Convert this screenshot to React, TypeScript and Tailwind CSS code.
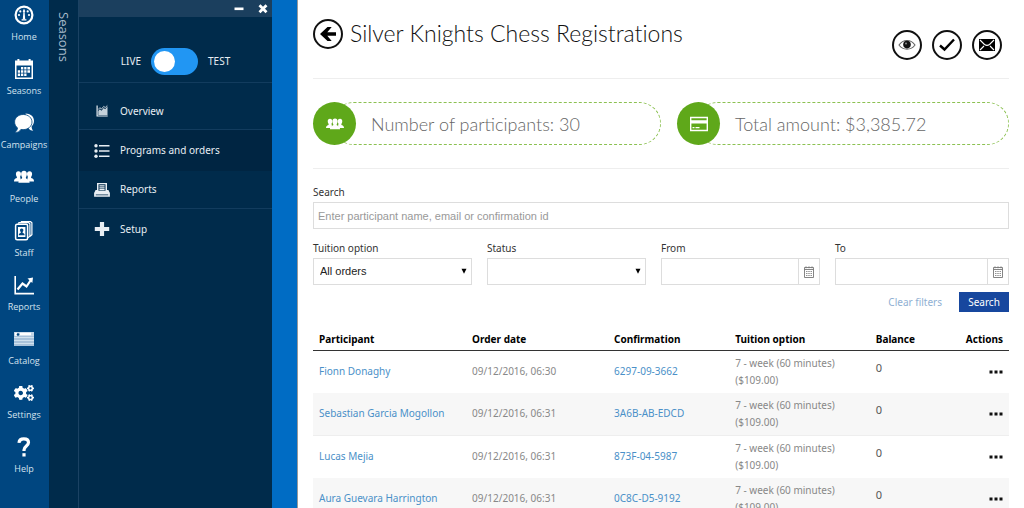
import type { ReactNode } from 'react';
import { FaCogs } from 'react-icons/fa';

function HomeIcon() {
  return (
    <svg viewBox="0 0 20 20" className="h-5 w-5" fill="currentColor">
      <circle cx="10" cy="10" r="8.4" fill="none" stroke="currentColor" strokeWidth="2.2" />
      <circle cx="5" cy="10" r="1.1" />
      <circle cx="6.3" cy="6.4" r="1.1" />
      <circle cx="13.7" cy="6.4" r="1.1" />
      <circle cx="15" cy="10" r="1.1" />
      <path d="M10 3.6l1.3 3-.7.3.6 7.4H8.8l.6-7.4-.7-.3z" />
      <path d="M7.6 14.2h4.8v1.3H7.6z" />
    </svg>
  );
}

function SeasonsIcon() {
  return (
    <svg viewBox="0 0 20 20" className="h-5 w-5" fill="currentColor">
      <path fillRule="evenodd" d="M1 1.500h18V20H1zM2.500 6.500v12h15v-12z" />
      <rect x="3.4" y="0" width="2" height="4" />
      <rect x="14.6" y="0" width="2" height="4" />
      <path d="M7 8h2.300v2.400H7zM10.200 8h2.300v2.400h-2.300zM13.400 8h2.600v2.400h-2.600zM3.800 11.300h2.300v2.400H3.800zM7 11.300h2.300v2.400H7zM10.200 11.300h2.300v2.400h-2.300zM13.400 11.300h2.600v2.400h-2.600zM3.800 14.600h2.300V17H3.800zM7 14.600h2.300V17H7zM10.200 14.600h2.300V17h-2.300z" />
    </svg>
  );
}

function CampaignsIcon() {
  return (
    <svg viewBox="0 0 20 20" className="h-5 w-5" fill="currentColor">
      <path d="M11.500.5c4.900 0 8.500 3 8.500 7.200 0 2.400-.9 4.300-2.400 5.700.1 1.900.6 3 1.700 4.400-2 0-3.500-.8-4.500-2z" />
      <path
        d="M9.300 1.500C4.400 1.500.6 4.800.6 9c0 2.400 1.100 4.400 2.900 5.800-.1 1.900-1 3.400-2.700 4.900 2.700 0 4.800-1.200 6.100-3.300.8.2 1.600.2 2.400.2 4.900 0 8.700-3.400 8.700-7.600S14.200 1.500 9.300 1.500z"
        stroke="#004680"
        strokeWidth=".8"
      />
    </svg>
  );
}

function PeopleIcon({ className = 'h-5 w-5' }: { className?: string }) {
  return (
    <svg viewBox="0 0 20 20" className={className} fill="currentColor">
      <path d="M4.400 4.200C6.200 4.200 7 5.300 7 7c0 1.200-.5 2.200-.9 2.800 0 .6.500 1.500.5 1.500l-.8 3.200H0c0-2.200.6-2.600 2.800-3.500.2-.4.2-.8 0-1.200C2.300 9.200 1.900 8.200 1.900 7c0-1.700.8-2.800 2.500-2.800zM15.600 4.200C13.800 4.200 13 5.300 13 7c0 1.200.5 2.200.9 2.800 0 .6-.5 1.500-.5 1.500l.8 3.200H20c0-2.200-.6-2.600-2.800-3.500-.2-.4-.2-.8 0-1.200.5-.6.9-1.600.9-2.800 0-1.700-.8-2.800-2.500-2.800z" />
      <path d="M10 3.800c2 0 2.900 1.300 2.900 3.200 0 1.500-.6 2.600-1 3.200-.1.600 0 1 .2 1.300 2.500 1 3.500 1.700 3.500 4.300H4.400c0-2.600 1-3.300 3.500-4.300.2-.3.300-.7.200-1.300-.4-.6-1-1.700-1-3.200 0-1.900.9-3.200 2.900-3.200z" />
    </svg>
  );
}

function StaffIcon() {
  return (
    <svg viewBox="0 0 20 20" className="h-5 w-5" fill="none" stroke="currentColor" strokeWidth="1.200">
      <path d="M4.500 2.800l.4-1.200h9.400l1.600 1.200v12.400l-1.800 1.400M7 1.500L7.400.7h9.200l1.300 1v12l-1.700 1.500" />
      <rect x="1.600" y="3.200" width="12" height="15.600" rx="1.500" strokeWidth="1.500" />
      <path fill="currentColor" stroke="none" d="M4 6h7.400v10H4z" />
      <path fill="#004680" stroke="none" d="M7.700 7.500c1.200 0 1.700.8 1.700 1.800 0 .8-.4 1.400-.8 1.800v.6c1.500.5 2 1 2 2.500H4.800c0-1.500.5-2 2-2.500v-.6c-.4-.4-.8-1-.8-1.800 0-1 .5-1.800 1.700-1.800z" />
    </svg>
  );
}

function ReportsIcon() {
  return (
    <svg viewBox="0 0 20 20" className="h-5 w-5" fill="none" stroke="currentColor">
      <path d="M1.200 1v17.600H20" strokeWidth="1.600" />
      <path d="M3.500 14.500l5-6 4 3 4.700-7" strokeWidth="2.200" />
      <path d="M13.500 3.400l5.500-.9-.7 5.500z" fill="currentColor" stroke="none" />
    </svg>
  );
}

function CatalogIcon() {
  return (
    <svg viewBox="0 0 20 20" className="h-5 w-5">
      <rect y="3" width="20" height="14" fill="#a9c2da" />
      <path d="M0 3h20v4H0z" fill="#c3d5e6" />
      <path d="M1 3.800h2v3H1zM6 3.800h11v2.400H6z" fill="#fff" />
      <circle cx="4" cy="5.500" r="1.300" fill="#004680" />
      <path d="M0 8.500h20M0 11.500h20M0 14.500h20" stroke="#dce8f2" strokeWidth=".8" />
    </svg>
  );
}

function HelpIcon() {
  return (
    <svg viewBox="0 0 20 20" className="h-5 w-5" fill="none" stroke="currentColor" strokeWidth="3.200">
      <path d="M5 5.900C5.200 2.900 7 1.900 9.800 1.900c3 0 4.700 1.300 4.700 3.700 0 3.400-4.500 3.500-4.500 7.400v1" />
      <path d="M10 16.200v3.300" />
    </svg>
  );
}

function OverviewIcon() {
  return (
    <svg viewBox="0 0 16 16" className="h-4 w-4" fill="currentColor">
      <path d="M2.500 2.500h1.200v10h10v1H2.500z" />
      <path d="M4.300 12V8l1.500-1.800 1.700 1.500L9.700 5l1.500 1.300 2.300-3V12z" opacity=".85" />
      <path d="M4.300 6.500l1.500-1.800 1.700 1.300 2.200-2.600 1.500 1.200L13.300 2.500" fill="none" stroke="currentColor" strokeWidth=".8" />
    </svg>
  );
}

function ListIcon() {
  return (
    <svg viewBox="0 0 16 16" className="h-4 w-4" fill="currentColor">
      <path d="M5 2h10.500v1.500H5zM5 7.200h10.500v1.500H5zM5 12.400h10.500v1.500H5z" />
      <circle cx="2" cy="2.800" r="1.700" />
      <circle cx="2" cy="8" r="1.700" />
      <circle cx="2" cy="13.200" r="1.700" />
    </svg>
  );
}

function PrintIcon() {
  return (
    <svg viewBox="0 0 16 16" className="h-4 w-4" fill="currentColor">
      <path fillRule="evenodd" d="M3 1h10v9H3zM4.500 2.300v6.500h7V2.300z" />
      <path d="M5.400 3.300h5.200v1.300H5.400zM5.400 5.200h5.200v1.200H5.400zM5.400 7h5.200v1.200H5.400z" />
      <path fillRule="evenodd" d="M1.600 8H3v2h10V8h1.400l1.500 3v3.700H.1V11zM1.800 12.400v.8h12.400v-.8z" />
    </svg>
  );
}

function PlusIcon() {
  return (
    <svg viewBox="0 0 16 16" className="h-4 w-4" fill="currentColor">
      <path d="M5.900 1h4.200v5h5.100v4h-5.100v5H5.900v-5H.8V6h5.100z" />
    </svg>
  );
}

function CardIcon() {
  return (
    <svg viewBox="0 0 18 18" className="h-[18px] w-[18px]" fill="currentColor">
      <path fillRule="evenodd" d="M0 1.800h18v14.400H0zM1.400 3.200v2h15.200v-2zM1.400 8.500v6.300h15.200V8.500z" />
      <path d="M2.500 12h2v1.300h-2zM5.500 12h4v1.300h-4z" />
    </svg>
  );
}

function CalendarIcon() {
  return (
    <svg viewBox="0 0 12 12" className="h-3 w-3" fill="none" stroke="#777">
      <path d="M1.500 1.500h9v10h-9zM1.500 3.500h9" strokeWidth=".9" />
      <path d="M3 .3v2M9 .3v2M6 .3v2" strokeWidth=".8" />
      <path d="M3.200 5.500h5.800M3.200 7.500h5.800M3.200 9.500h5.800" strokeWidth="1.100" strokeDasharray="1.200 1" />
    </svg>
  );
}

const railNav = [
  { label: 'Home', icon: <HomeIcon /> },
  { label: 'Seasons', icon: <SeasonsIcon /> },
  { label: 'Campaigns', icon: <CampaignsIcon /> },
  { label: 'People', icon: <PeopleIcon /> },
  { label: 'Staff', icon: <StaffIcon /> },
  { label: 'Reports', icon: <ReportsIcon /> },
  { label: 'Catalog', icon: <CatalogIcon /> },
  { label: 'Settings', icon: <FaCogs className="h-5 w-5" /> },
  { label: 'Help', icon: <HelpIcon /> },
];

const seasonNav = [
  { label: 'Overview', icon: <OverviewIcon />, row: 'h-[47px] pt-2.5 border-b border-[#123c5e]' },
  { label: 'Programs and orders', icon: <ListIcon />, row: 'h-[41px] bg-[#002542]' },
  { label: 'Reports', icon: <PrintIcon />, row: 'h-[38px] border-b border-[#123c5e]' },
  { label: 'Setup', icon: <PlusIcon />, row: 'h-10' },
];

const orders = [
  { name: 'Fionn Donaghy', date: '09/12/2016, 06:30', code: '6297-09-3662' },
  { name: 'Sebastian Garcia Mogollon', date: '09/12/2016, 06:31', code: '3A6B-AB-EDCD' },
  { name: 'Lucas Mejia', date: '09/12/2016, 06:31', code: '873F-04-5987' },
  { name: 'Aura Guevara Harrington', date: '09/12/2016, 06:31', code: '0C8C-D5-9192' },
];

function RoundButton({ label, children }: { label: string; children: ReactNode }) {
  return (
    <button type="button" aria-label={label} className="flex h-[30px] w-[30px] shrink-0 items-center justify-center rounded-full border-2 border-[#111] text-black">
      {children}
    </button>
  );
}

function Stat({ icon, className, children }: { icon: ReactNode; className: string; children: ReactNode }) {
  return (
    <div className={`flex h-[43px] items-center ${className}`}>
      <div className="z-10 flex h-[43px] w-[43px] shrink-0 items-center justify-center rounded-full bg-[#5fa81a] text-white">{icon}</div>
      <div className="-ml-6 flex h-[43px] flex-1 items-center rounded-full border border-dashed border-[#8cc152] pl-[38px] font-['Lato'] text-lg font-light text-[#666]">
        {children}
      </div>
    </div>
  );
}

function SelectField({ id, label, options }: { id: string; label: string; options: string[] }) {
  return (
    <div className="min-w-0 flex-1">
      <label htmlFor={id} className="block leading-4">{label}</label>
      <div className="relative mt-0.5">
        <select id={id} className="block h-[27px] w-full appearance-none border border-[#ddd] bg-white px-1.5 font-['Liberation_Sans'] text-[11px] text-[#222]">
          {options.map((option) => (
            <option key={option}>{option}</option>
          ))}
        </select>
        <svg viewBox="0 0 6 6" className="pointer-events-none absolute top-2.5 right-[5px] h-1.5 w-1.5">
          <path d="M.5.800h5L3 5.800z" fill="#000" />
        </svg>
      </div>
    </div>
  );
}

function DateField({ id, label, className }: { id: string; label: string; className: string }) {
  return (
    <div className={className}>
      <label htmlFor={id} className="block leading-4">{label}</label>
      <div className="mt-0.5 flex h-[27px] border border-[#ddd]">
        <input id={id} type="text" className="min-w-0 flex-1 px-1.5 font-['Liberation_Sans'] text-[11px]" />
        <button type="button" aria-label={`Pick date: ${label}`} className="flex w-[21px] items-center justify-center border-l border-[#ddd]">
          <CalendarIcon />
        </button>
      </div>
    </div>
  );
}

export default function App() {
  return (
    <div className="flex h-screen overflow-hidden bg-white font-['Noto_Sans','Open_Sans',sans-serif] text-[10px] text-[#333]">
      <nav className="w-[49px] shrink-0 bg-[#004680] text-white">
        {railNav.map((item) => (
          <a key={item.label} href="#" className="flex h-[54px] flex-col items-center pt-[5px] pr-px">
            {item.icon}
            <span className="mt-1 font-['Open_Sans',sans-serif] text-[9px] leading-4 text-[#d5e3ef]">{item.label}</span>
          </a>
        ))}
      </nav>

      <div className="flex w-[30px] shrink-0 justify-center border-r border-[#1b4263] bg-[#002b4b] pt-3">
        <span className="h-14 font-['Open_Sans',sans-serif] text-[13px] leading-4 text-[#a9bccb] [writing-mode:vertical-rl]">Seasons</span>
      </div>

      <aside className="w-[193px] shrink-0 bg-[#002b4b] text-[#e8eef3]">
        <div className="flex h-[17px] items-center justify-end gap-3.5 bg-[#1b3f5e] pr-1 text-white">
          <button type="button" aria-label="Minimize">
            <svg viewBox="0 0 10 10" className="h-2.5 w-2.5"><path d="M.5 3.500h9v2.600h-9z" fill="currentColor" /></svg>
          </button>
          <button type="button" aria-label="Close">
            <svg viewBox="0 0 10 10" className="h-2.5 w-2.5"><path d="M1.500 1.200l7 7M8.500 1.200l-7 7" stroke="currentColor" strokeWidth="2.800" /></svg>
          </button>
        </div>
        <label className="flex h-[66px] items-center justify-center gap-2 border-b border-[#123c5e] pt-7 pb-1 text-[10px]">
          <span>LIVE</span>
          <input type="checkbox" className="peer sr-only" />
          <span className="mx-0.5 flex h-[27px] w-[47px] items-center rounded-full bg-[#2196f3] px-[3px] peer-checked:justify-end">
            <span className="h-[21px] w-[21px] rounded-full bg-white" />
          </span>
          <span>TEST</span>
        </label>
        {seasonNav.map((item) => (
          <a key={item.label} href="#" className={`flex items-center gap-2.5 pl-[15px] text-[10px] ${item.row}`}>
            {item.icon}
            {item.label}
          </a>
        ))}
      </aside>

      <div className="w-[25px] shrink-0 bg-[#006cc4]" />

      <main className="min-w-0 flex-1 border-l border-[#999] px-[15px]">
        <header className="flex h-[79px] justify-between border-b border-[#eee]">
          <div className="flex items-start gap-[7px] pt-[19px]">
            <RoundButton label="Back">
              <svg viewBox="0 0 18 18" className="h-[18px] w-[18px] shrink-0">
                <path d="M8.500 2h4.200L8.300 7.300H17v3.400H8.300l4.400 5.300H8.500L1 9z" fill="currentColor" />
              </svg>
            </RoundButton>
            <h1 className="font-['Lato'] text-[23px] leading-7 font-light text-[#111] [font-variant-ligatures:none]">Silver Knights Chess Registrations</h1>
          </div>
          <div className="flex gap-2.5 pt-[30px] pr-[7px]">
            <RoundButton label="View">
              <svg viewBox="0 0 18 18" className="h-[18px] w-[18px] shrink-0" fill="none">
                <path d="M1 9c4-6 12-6 16 0-4 5.500-12 5.500-16 0z" stroke="#666" strokeWidth="1.100" />
                <circle cx="9" cy="8.600" r="3.800" fill="#111" />
                <circle cx="8" cy="7.500" r=".9" fill="#999" />
              </svg>
            </RoundButton>
            <RoundButton label="Approve">
              <svg viewBox="0 0 18 18" className="h-[18px] w-[18px] shrink-0">
                <path d="M2 9.500l4.500 4L16 3.500" fill="none" stroke="currentColor" strokeWidth="2.400" />
              </svg>
            </RoundButton>
            <RoundButton label="Email">
              <svg viewBox="0 0 18 18" className="h-[18px] w-[18px] shrink-0">
                <path d="M1 3h16v12H1z" fill="currentColor" />
                <path d="M2 4l4.500 4.500c2 1.500 3 1.500 5 0L16 4M2 14l4-4M16 14l-4-4" fill="none" stroke="#fff" strokeWidth="1.100" />
              </svg>
            </RoundButton>
          </div>
        </header>

        <section className="flex h-[90px] gap-4 border-b border-[#eee] pt-[23px]">
          <Stat icon={<PeopleIcon className="h-[18px] w-[18px]" />} className="w-1/2">Number of participants: 30</Stat>
          <Stat icon={<CardIcon />} className="flex-1">Total amount: $3,385.72</Stat>
        </section>

        <form className="pt-[15px]" onSubmit={(e) => e.preventDefault()}>
          <label htmlFor="search" className="block leading-4">Search</label>
          <input
            id="search"
            type="text"
            placeholder="Enter participant name, email or confirmation id"
            className="mt-0.5 block h-[27px] w-full border border-[#ddd] px-1 font-['Liberation_Sans'] text-[11px] placeholder:text-[#999]"
          />
          <div className="mt-[11px] flex gap-[15px]">
            <SelectField id="tuition" label="Tuition option" options={['All orders']} />
            <SelectField id="status" label="Status" options={['']} />
            <DateField id="from" label="From" className="min-w-0 flex-1" />
            <DateField id="to" label="To" className="w-[25%]" />
          </div>
          <div className="mt-[7px] flex items-center justify-end gap-[17px]">
            <button type="reset" className="text-[#8fb0d3]">Clear filters</button>
            <button type="submit" className="h-5 w-[50px] bg-[#17479e] text-white">Search</button>
          </div>
        </form>

        <table className="mt-[17px] w-full table-fixed text-left text-[#888]">
          <thead>
            <tr className="h-[21px] border-b border-[#333] text-black">
              <th className="w-[22%] px-1.5 font-bold">Participant</th>
              <th className="w-[20.4%] px-1.5 font-bold">Order date</th>
              <th className="w-[17.4%] px-1.5 font-bold">Confirmation</th>
              <th className="w-[20.2%] px-1.5 font-bold">Tuition option</th>
              <th className="px-1.5 font-bold">Balance</th>
              <th className="w-[10%] px-1.5 text-right font-bold">Actions</th>
            </tr>
          </thead>
          <tbody>
            {orders.map((order) => (
              <tr key={order.code} className="border-[#eee] leading-[17px] even:border-b even:bg-[#f7f7f7]">
                <td className="px-1.5 whitespace-nowrap"><a href="#" className="text-[#4a90c8]">{order.name}</a></td>
                <td className="px-1.5 whitespace-nowrap">{order.date}</td>
                <td className="px-1.5 whitespace-nowrap"><a href="#" className="text-[#4a90c8]">{order.code}</a></td>
                <td className="px-1.5 py-1">7 - week (60 minutes) ($109.00)</td>
                <td className="px-1.5 pb-2 text-[11px] text-[#555]">0</td>
                <td className="px-1.5">
                  <button type="button" aria-label={`Actions for ${order.name}`} className="ml-auto block">
                    <svg viewBox="0 0 14 4" className="h-1 w-3.5" fill="#111">
                      <path d="M.5.500h3v3h-3zM5.500.500h3v3h-3zM10.500.500h3v3h-3z" />
                    </svg>
                  </button>
                </td>
              </tr>
            ))}
          </tbody>
        </table>
      </main>
    </div>
  );
}
